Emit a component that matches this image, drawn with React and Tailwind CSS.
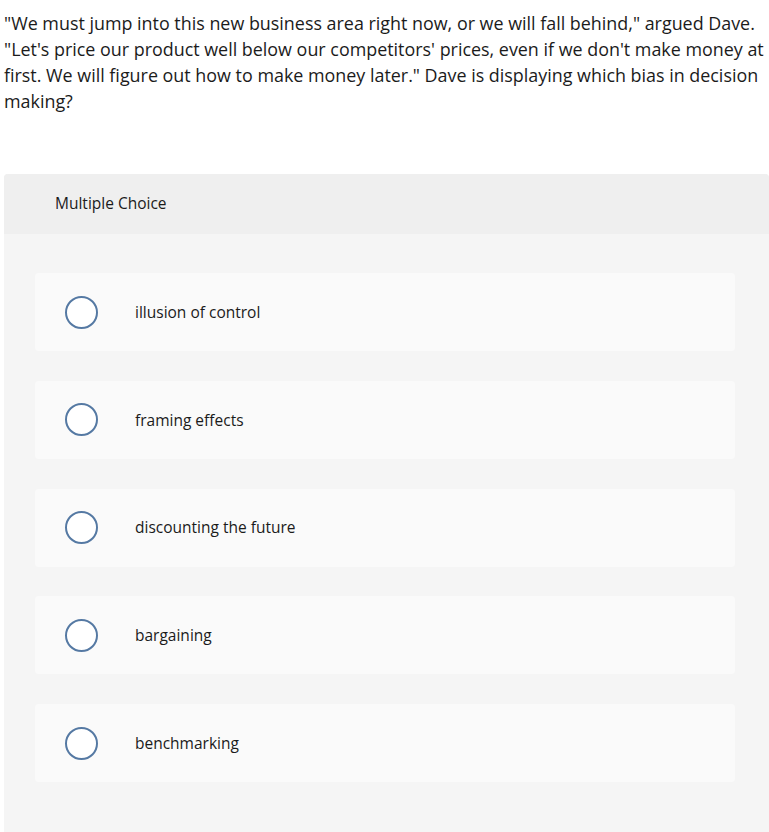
import React from "react";

const options = [
  "illusion of control",
  "framing effects",
  "discounting the future",
  "bargaining",
  "benchmarking",
];

export default function App() {
  return (
    <div className="min-h-[832px] bg-white text-[#1b1b1b]" style={{ fontFamily: "'Open Sans', Lato, sans-serif" }}>
      <div className="pl-[4px] pt-[10px] text-[17.9px] leading-[26px] whitespace-nowrap">
        "We must jump into this new business area right now, or we will fall behind," argued Dave.
        <br />
        "Let's price our product well below our competitors' prices, even if we don't make money at
        <br />
        first. We will figure out how to make money later." Dave is displaying which bias in decision
        <br />
        making?
      </div>
      <div className="ml-[4px] mt-[60px] rounded-t-[4px] bg-[#f5f5f5] pb-[70px]">
        <div className="flex h-[60px] items-center rounded-t-[4px] bg-[#efefef] pl-[51px] text-[15.5px]">
          Multiple Choice
        </div>
        <div className="flex flex-col gap-[29.75px] pl-[31px] pr-[34px] pt-[39px]">
          {options.map((o) => (
            <div key={o} className="flex h-[78px] items-center rounded-[4px] bg-[#fafafa]">
              <div className="ml-[30px] h-[33px] w-[33px] rounded-full border-2 border-[#5579a3] bg-white" />
              <div className="ml-[37px] pt-[1px] text-[15.5px]">{o}</div>
            </div>
          ))}
        </div>
      </div>
    </div>
  );
}
